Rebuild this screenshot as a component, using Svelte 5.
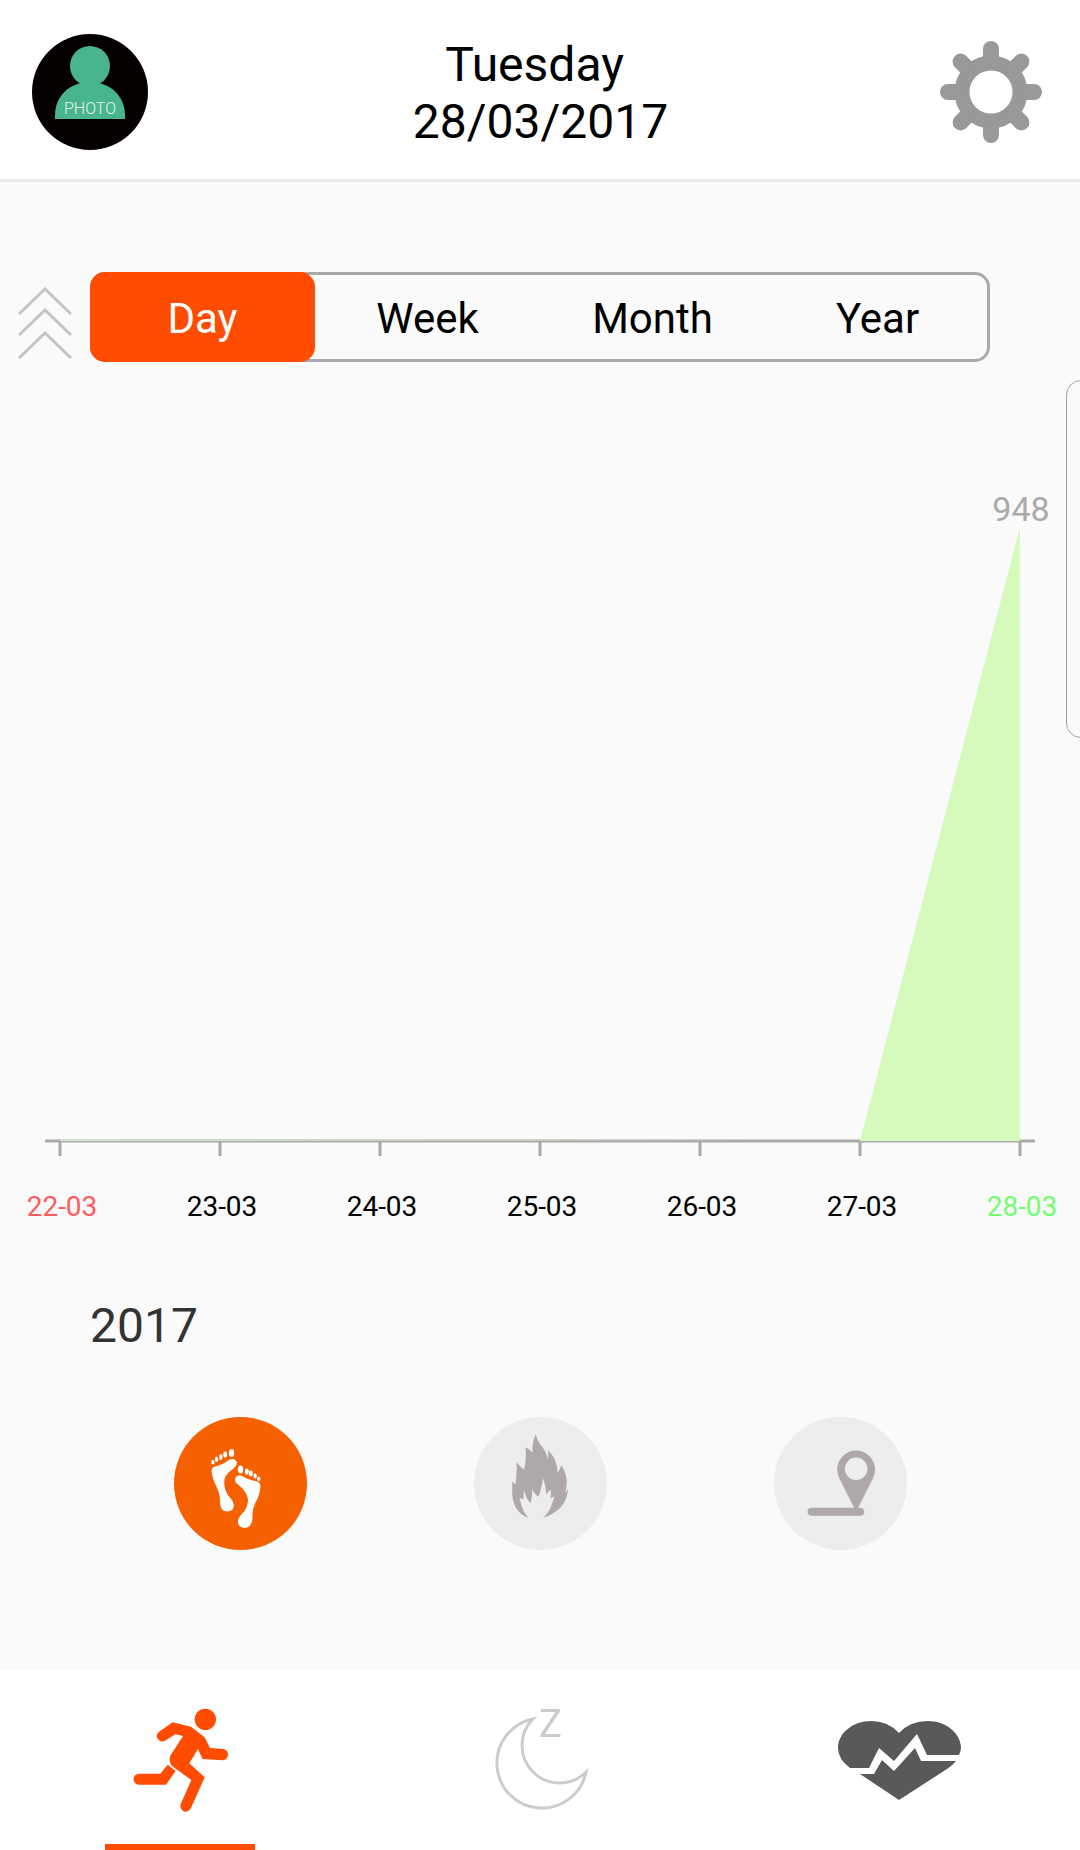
<script>
  const periods = ['Day', 'Week', 'Month', 'Year'];
  const metrics = ['Steps', 'Calories', 'Distance'];
  const tabs = ['Activity', 'Sleep', 'Heart rate'];

  const days = [
    { label: '22-03', steps: 0 },
    { label: '23-03', steps: 0 },
    { label: '24-03', steps: 0 },
    { label: '25-03', steps: 0 },
    { label: '26-03', steps: 0 },
    { label: '27-03', steps: 0 },
    { label: '28-03', steps: 948 }
  ];

  // chart geometry, in viewBox units
  const left = 60;
  const step = 160;
  const base = 779;
  const plotHeight = 614;

  let period = 'Day';
  let metric = 'Steps';
  let tab = 'Activity';

  const maxSteps = Math.max(...days.map((d) => d.steps));
  const points = days.map((d, i) => ({
    ...d,
    x: left + i * step,
    y: base - (d.steps / maxSteps) * plotHeight
  }));
  const right = points[points.length - 1].x;

  // empty days are skipped unless the line rises from them, which leaves a
  // thin green wedge on the axis
  const outline = points.filter((p, i) => i > 0 && (p.steps > 0 || points[i + 1]?.steps > 0));
  const area = [
    `${left},${base - 1}`,
    ...outline.map((p) => `${p.x},${p.y}`),
    `${right},${base}`,
    `${left},${base}`
  ].join(' ');
</script>

<div class="screen">
  <header class="topbar">
    <button class="icon-button" aria-label="Profile photo">
      <svg class="avatar" viewBox="0 0 116 116">
        <circle cx="58" cy="58" r="58" fill="#040000" />
        <circle cx="58" cy="32" r="20" fill="#48b58d" />
        <path d="M23 85V81C23 63 37 48 58 48S93 63 93 81V85Z" fill="#48b58d" />
        <text class="avatar-text" x="58" y="80" text-anchor="middle">PHOTO</text>
      </svg>
    </button>
    <h1 class="date">Tuesday&nbsp;<br />28/03/2017</h1>
    <button class="icon-button" aria-label="Settings">
      <svg class="gear" viewBox="-52 -52 104 104">
        <circle r="29" fill="none" stroke="#999" stroke-width="15" />
        {#each [0, 45, 90, 135, 180, 225, 270, 315] as angle}
          <path d="M0 -32V-43" transform="rotate({angle})" stroke="#999" stroke-width="16" stroke-linecap="round" />
        {/each}
      </svg>
    </button>
  </header>

  <main class="content">
    <div class="period-row">
      <button class="collapse" aria-label="Collapse">
        <svg class="chevrons" viewBox="0 0 54 72">
          <path d="M1 27L27 2L53 27M1 48L27 23L53 48M1 71L27 46L53 71" fill="none" stroke="#c4c4c4" stroke-width="3" />
        </svg>
      </button>
      <div class="segments">
        {#each periods as name}
          <button class="segment" class:active={period === name} on:click={() => (period = name)}>{name}</button>
        {/each}
      </div>
    </div>

    <svg class="chart" viewBox="0 0 1080 878" role="img" aria-label="Steps per day">
      <g stroke="#a9a9a9" stroke-width="3">
        <path d="M45 {base}H1035" />
        {#each points as p}
          <path d="M{p.x} {base}V{base + 15}" />
        {/each}
      </g>
      <polygon points={area} fill="#d5fabb" />
      {#each points as p, i}
        {#if p.steps > 0}
          <text class="value" x={p.x + 1} y={p.y - 6}>{p.steps}</text>
        {/if}
        <text class="day" class:first={i === 0} class:last={i === points.length - 1} x={p.x + 2} y="854">{p.label}</text>
      {/each}
    </svg>

    <h2 class="year">2017</h2>

    <div class="metrics">
      {#each metrics as name}
        <button class="metric" class:active={metric === name} aria-label={name} on:click={() => (metric = name)}>
          {#if name === 'Steps'}
            <svg viewBox="39 50 400 400" fill="currentColor">
              <path d="M152 214Q151 203 162 199Q190 191 203 180Q214 173 223 179Q232 187 225 197Q218 206 204 216Q190 228 190 246Q190 268 202 286Q218 302 219 316Q218 334 199 334Q180 333 178 313Q178 284 169 264Q155 238 152 214Z" />
              <ellipse cx="212" cy="158" rx="8" ry="12" />
              <ellipse cx="193" cy="163" rx="6" ry="9" />
              <ellipse cx="180" cy="170" rx="5" ry="9" />
              <ellipse cx="167" cy="177" rx="5" ry="8" />
              <ellipse cx="156" cy="186" rx="5" ry="7" />
              <path d="M222 240Q223 226 236 225Q246 227 256 234Q272 241 289 244Q299 248 299 260Q297 285 284 308Q274 328 275 350Q275 382 251 384Q231 382 231 363Q233 349 250 334Q263 316 261 295Q256 274 235 256Q223 248 222 240Z" />
              <ellipse cx="239" cy="208" rx="8" ry="12" />
              <ellipse cx="258" cy="214" rx="6" ry="9" />
              <ellipse cx="270" cy="220" rx="6" ry="9" />
              <ellipse cx="283" cy="227" rx="5" ry="8" />
              <ellipse cx="294" cy="236" rx="5" ry="7" />
            </svg>
          {:else if name === 'Calories'}
            <svg viewBox="41 50 400 400" fill="currentColor">
              <path d="M227 103Q231 124 248 142Q259 158 263 176Q266 164 263 150Q283 168 288 190Q293 205 292 219Q301 208 303 194Q319 217 320 244Q320 262 315 279Q320 274 324 265Q322 300 300 324Q278 344 250 353Q270 334 275 312Q280 300 283 289Q277 290 271 295Q272 281 273 268Q264 274 258 283Q258 258 249 234Q246 252 241 270Q238 284 234 289Q221 282 217 265Q215 290 212 309Q200 300 196 284Q193 277 191 269Q190 283 190 297Q184 297 178 293Q183 318 190 333Q196 344 204 353Q180 345 165 320Q156 300 156 280V243Q160 249 166 252Q168 235 169 215Q171 200 168 186Q181 198 191 209Q197 190 197 165L196 142Q208 146 217 157Q216 140 219 126Q222 113 227 103Z" />
            </svg>
          {:else}
            <svg viewBox="41 50 400 400" fill="currentColor">
              <path fill-rule="evenodd" d="M231 208A57 57 0 0 1 345 208Q345 222 335 242L293 325H283L241 242Q231 222 231 208ZM254 206A34 34 0 1 0 322 206A34 34 0 1 0 254 206Z" />
              <rect x="142" y="323" width="170" height="24" rx="12" />
            </svg>
          {/if}
        </button>
      {/each}
    </div>

    <div class="edge-handle"></div>
  </main>

  <nav class="tabbar">
    {#each tabs as name}
      <button class="tab" class:active={tab === name} aria-label={name} on:click={() => (tab = name)}>
        {#if name === 'Activity'}
          <svg class="tab-icon" viewBox="75 135 390 390" fill="#ff4c00">
            <circle cx="346" cy="208" r="32" />
            <path d="M248 217L303 230L342 260Q348 268 360 294L400 297Q414 300 414 315Q412 331 396 331L338 327Q330 312 324 297L298 340L344 382L303 474Q296 486 284 485Q269 480 272 463L304 390L246 348Q235 335 241 317L279 258L256 253L225 272Q210 279 202 265Q197 253 207 245Z" />
            <path d="M233 344L257 363L228 404H147A16 16 0 0 1 147 371H211Z" />
          </svg>
        {:else if name === 'Sleep'}
          <svg class="tab-icon" viewBox="15 45 130 130">
            <path d="M73 69A45 45 0 1 0 126 122A37 37 0 0 1 73 69Z" fill="none" stroke="#ccc" stroke-width="3" />
            <text class="sleep-z" x="79" y="87">Z</text>
          </svg>
        {:else}
          <svg class="tab-icon" viewBox="375 45 130 130" fill="#595959">
            <path d="M439 83Q428 71 411 71C393 71 378 83 378 98Q378 109 390 118H409L419 98L434 111L457 84L467 105H499Q501 101 501 97C500 82 485 71 468 71Q450 71 439 83Z" />
            <path d="M400 124H414L422 110L434 121L455 98L461 111H496Q493 115 487 119L439 150Z" />
          </svg>
        {/if}
      </button>
    {/each}
  </nav>
</div>

<style>
  :global(body) {
    margin: 0;
    background: #fafafa;
  }

  .screen {
    display: flex;
    flex-direction: column;
    min-height: 100vh;
    overflow-x: hidden;
    font-family: Roboto, 'Liberation Sans', sans-serif;
    color: #000;
  }

  button {
    padding: 0;
    border: none;
    background: none;
    font: inherit;
    color: inherit;
    cursor: pointer;
  }

  svg {
    display: block;
  }

  .topbar {
    display: flex;
    align-items: center;
    justify-content: space-between;
    padding: 34px 31px 29px 32px;
    border-bottom: 3px solid #ececec;
    background: #fff;
  }

  .icon-button {
    display: flex;
    align-items: center;
    justify-content: center;
    width: 116px;
    height: 116px;
  }

  .avatar {
    width: 116px;
    height: 116px;
  }

  .avatar-text {
    font-size: 16px;
    font-weight: 300;
    fill: #e6f5ef;
  }

  .gear {
    width: 104px;
    height: 104px;
  }

  .date {
    margin: 0;
    padding-top: 2px;
    font-size: 48px;
    font-weight: 400;
    line-height: 57px;
    text-align: center;
  }

  .content {
    position: relative;
    flex: 1;
    padding: 90px 0 120px;
    background: #fafafa;
  }

  .period-row {
    display: flex;
    align-items: center;
    padding-right: 90px;
  }

  .collapse {
    display: flex;
    justify-content: center;
    width: 90px;
    padding-top: 12px;
  }

  .chevrons {
    width: 54px;
    height: 72px;
  }

  .segments {
    display: flex;
    flex: 1;
    border-radius: 15px;
    box-shadow: inset 0 0 0 3px #a9a9ad;
  }

  .segment {
    flex: 1;
    height: 90px;
    padding-top: 2px;
    border-radius: 15px;
    font-size: 42px;
  }

  .segment.active {
    background: #ff4c00;
    color: #fff;
  }

  .chart {
    width: 100%;
    height: auto;
  }

  .value {
    font-size: 34px;
    text-anchor: middle;
    fill: #aaa;
  }

  .day {
    font-size: 28px;
    text-anchor: middle;
    fill: #000;
  }

  .day.first {
    fill: #ff5c5c;
  }

  .day.last {
    fill: #70ff70;
  }

  .year {
    margin: 58px 90px 63px;
    font-size: 48px;
    font-weight: 400;
    line-height: 56px;
    color: #333;
  }

  .metrics {
    display: grid;
    grid-template-columns: repeat(3, 1fr);
    justify-items: center;
    padding: 0 90px;
  }

  .metric {
    width: 133px;
    height: 133px;
    border-radius: 50%;
    background: #ededed;
    color: #aea8a8;
  }

  .metric.active {
    background: #f56000;
    color: #fff;
  }

  /* drawer handle peeking in from the right edge */
  .edge-handle {
    position: absolute;
    top: 198px;
    right: -16px;
    width: 28px;
    height: 356px;
    border: 1px solid #a0a0a0;
    border-radius: 22px;
  }

  .tabbar {
    display: grid;
    grid-template-columns: repeat(3, 1fr);
    background: #fff;
  }

  .tab {
    position: relative;
    display: flex;
    align-items: center;
    justify-content: center;
    height: 180px;
  }

  .tab.active::after {
    content: '';
    position: absolute;
    bottom: 0;
    width: 150px;
    height: 6px;
    background: #ff4c00;
  }

  .tab-icon {
    width: 130px;
    height: 130px;
  }

  .sleep-z {
    font-size: 38px;
    font-weight: 400;
    fill: #ccc;
  }
</style>
